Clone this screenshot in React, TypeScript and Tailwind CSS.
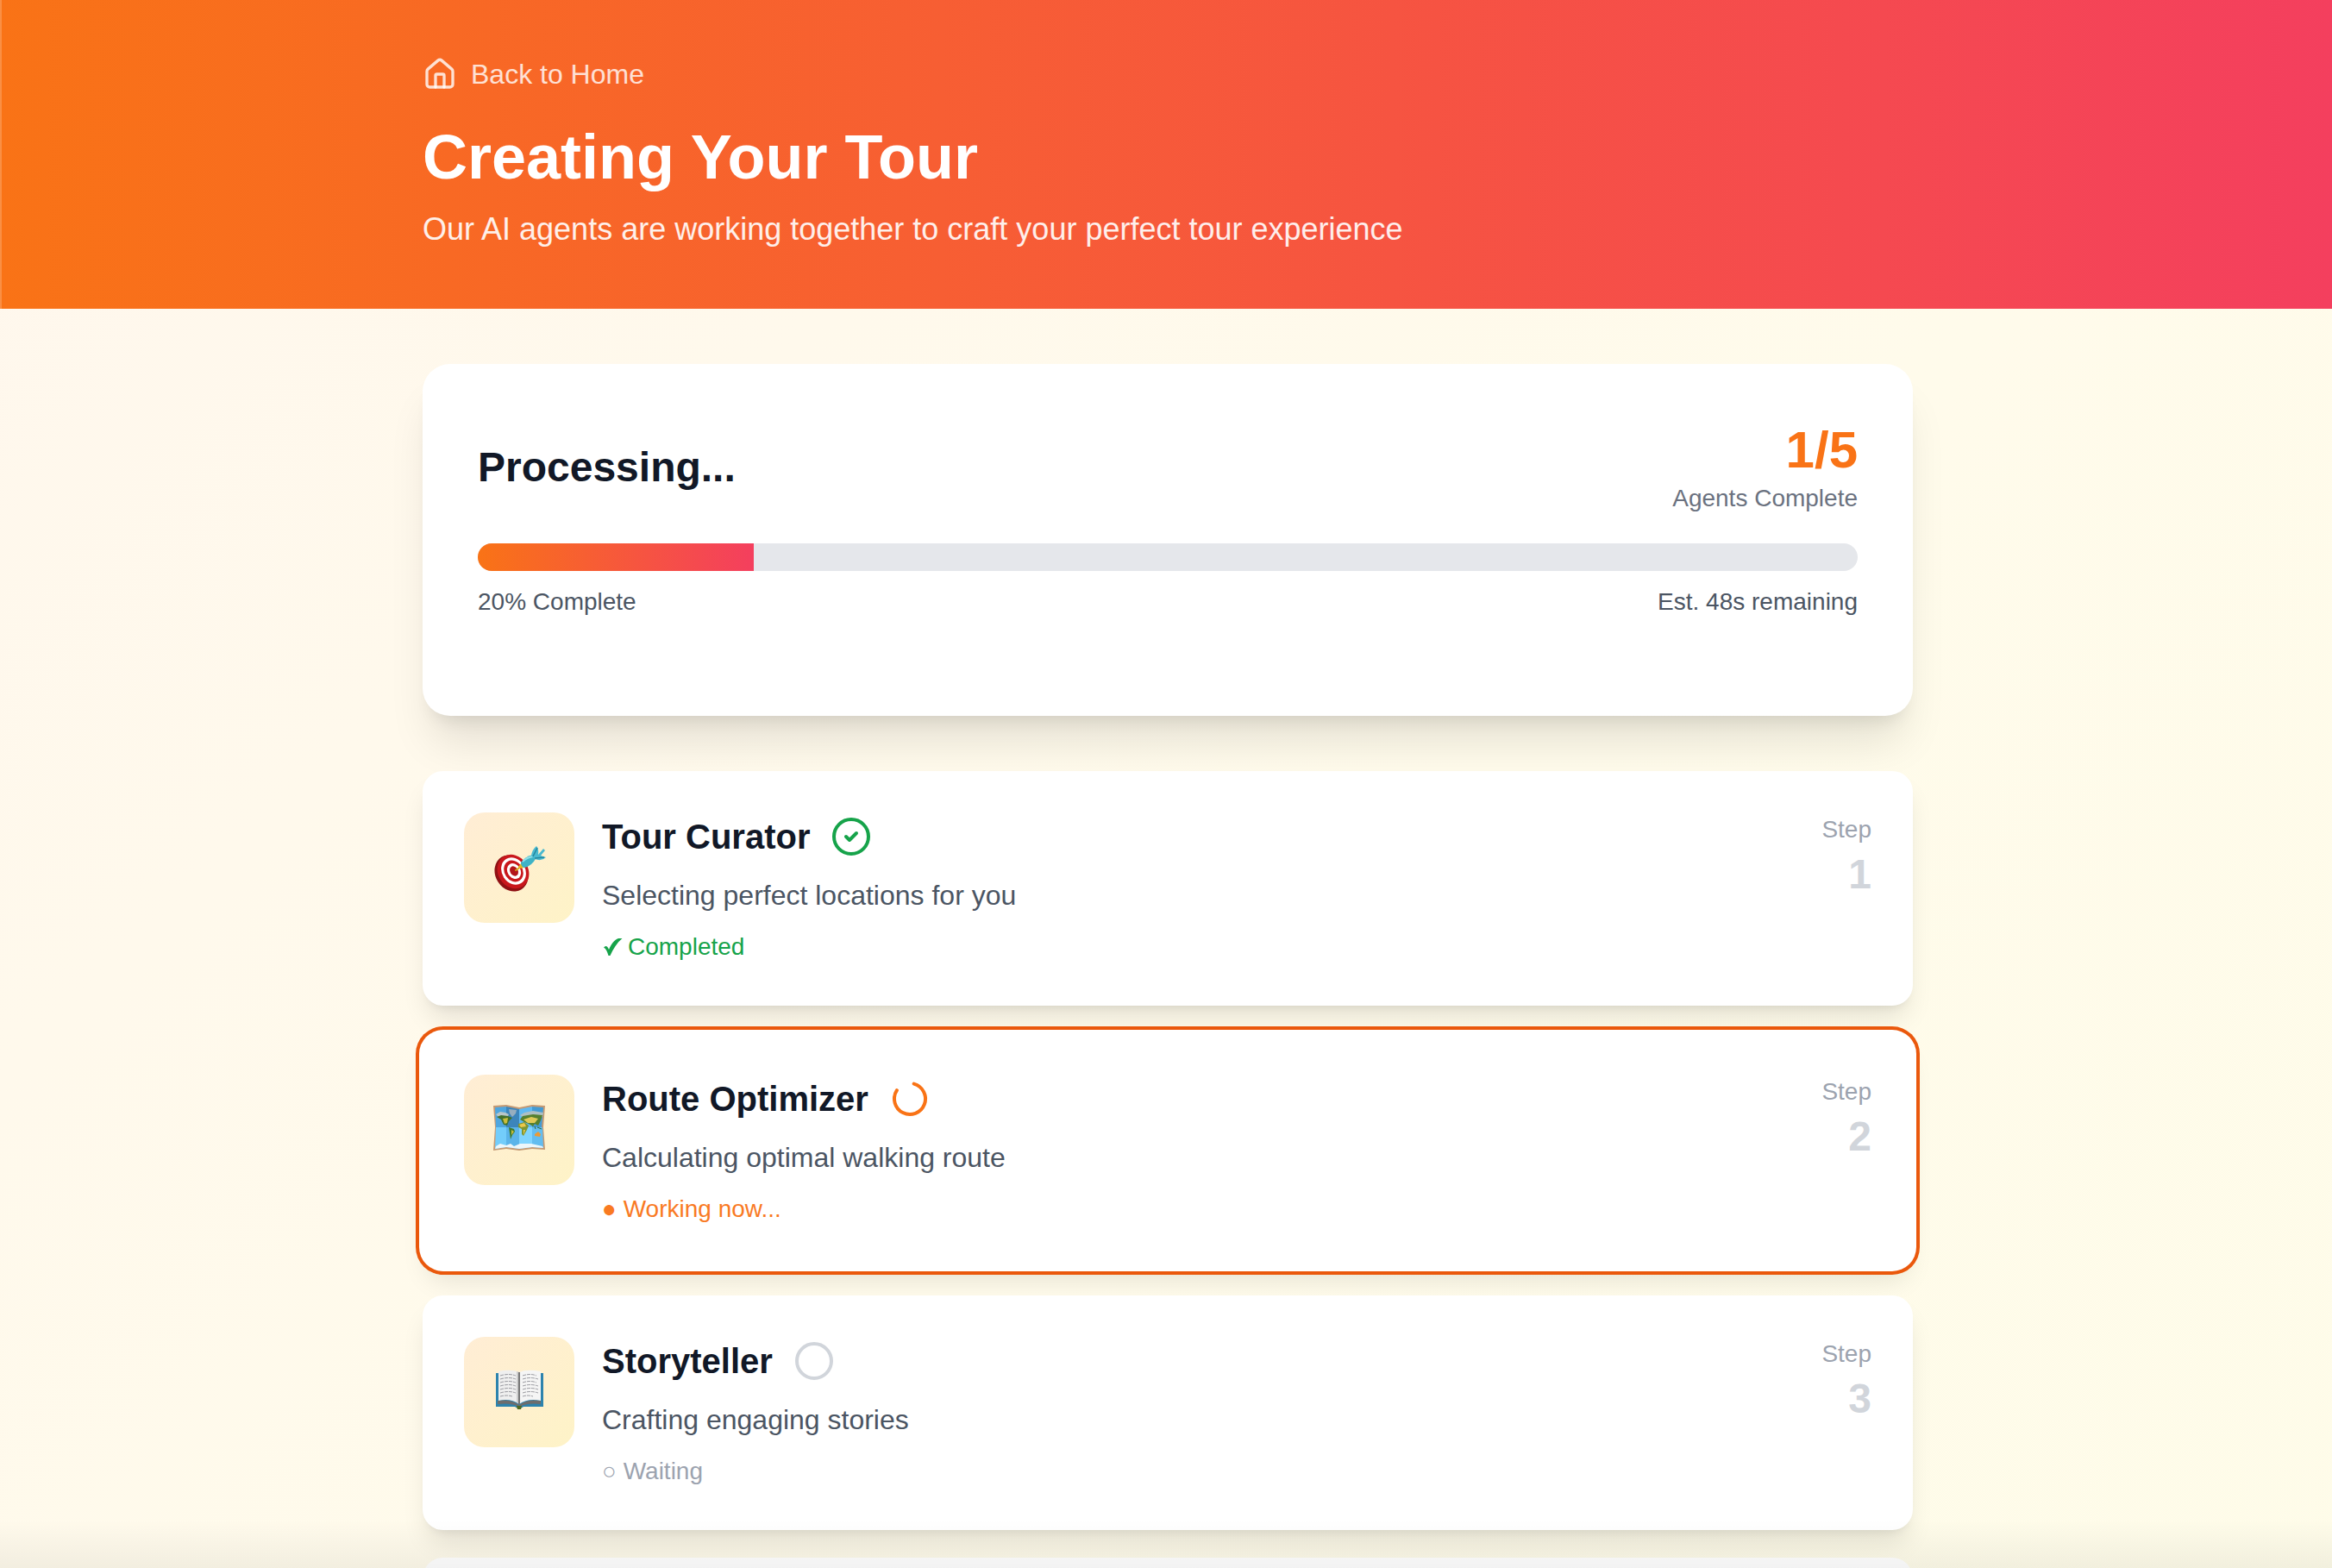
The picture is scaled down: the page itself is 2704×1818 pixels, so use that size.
import { Circle, CircleCheck, House, LoaderCircle } from "lucide-react";
import type { ReactNode } from "react";

type AgentStatus = "completed" | "working" | "waiting";

interface Agent {
  step: number;
  name: string;
  description: string;
  status: AgentStatus;
  icon: ReactNode;
}

function TargetIcon() {
  return (
    <svg className="w-16 h-16" viewBox="0 0 64 64" aria-hidden="true">
      {/* Board */}
      <ellipse cx="23" cy="38.5" rx="18.5" ry="22" transform="rotate(-32 23 38.5)" fill="#8f1114" />
      <ellipse cx="25" cy="36.500" rx="17.500" ry="20.500" transform="rotate(-32 25 36.5)" fill="#c9171c" />
      <ellipse cx="25.500" cy="36" rx="13.500" ry="16.500" transform="rotate(-32 25.5 36)" fill="#fff" />
      <ellipse cx="25.500" cy="36" rx="10.500" ry="13" transform="rotate(-32 25.5 36)" fill="#c9171c" />
      <ellipse cx="26" cy="36" rx="7.500" ry="9.500" transform="rotate(-32 26 36)" fill="#fff" />
      <ellipse cx="26" cy="36" rx="4.500" ry="6" transform="rotate(-32 26 36)" fill="#b3151a" />
      {/* Dart */}
      <path d="M28 35 L34 31" stroke="#d9a514" strokeWidth="2" strokeLinecap="round" />
      <path d="M31 31 L35 26 L38 32 L32 33 Z" fill="#e6b91f" />
      <path d="M34 26 Q39 19 48 17 L52 20 Q47 30 38 32 Q34 31 34 26 Z" fill="#3eb3c6" />
      <path d="M36 25 Q41 20 48 19" stroke="#8fe0e8" strokeWidth="2" fill="none" />
      <path d="M46 18 Q47 11 52 7 Q55 10 54 17 L60 10 L62 12 L57 18 L63 20 Q58 25 50 22 Z" fill="#4ab9cf" />
      <path d="M48 19 L53 9 M50 21 L61 20" stroke="#26879e" strokeWidth="1.500" />
    </svg>
  );
}

function MapIcon() {
  return (
    <svg className="w-16 h-16" viewBox="0 0 64 64" aria-hidden="true">
      {/* Paper */}
      <path d="M2 4 L17 3 L32 6 L47 3 L62 4 L60 29 L62 55 L47 54 L32 56 L17 54 L2 56 L4 29 Z" fill="#c59a74" />
      <path d="M4 6 L17 5 L17 29 L5 29 Z" fill="#4fa6df" />
      <path d="M17 5 L32 8 L32 29 L17 29 Z" fill="#3c85bb" />
      <path d="M32 8 L47 5 L47 29 L32 29 Z" fill="#5fb9f2" />
      <path d="M47 5 L60 6 L58 29 L47 29 Z" fill="#439bd4" />
      <path d="M5 29 L17 29 L17 52 L4 54 Z" fill="#73cdfb" />
      <path d="M17 29 L32 29 L32 54 L17 52 Z" fill="#5bb4ea" />
      <path d="M32 29 L47 29 L47 52 L32 54 Z" fill="#7fd4ff" />
      <path d="M47 29 L59 29 L60 53 L47 52 Z" fill="#63bdf0" />
      {/* Americas */}
      <path d="M5 14 L10 11 L16 12 L20 14 L18 18 L8 17 Z" fill="#b9c6c9" />
      <path d="M6 17 L11 15 L19 16 L24 18 L20 22 L18 27 L14 26 L11 20 Z" fill="#42702c" />
      <path d="M13 19 L19 18 L18 24 L15 25 Z" fill="#c9bd3b" />
      <path d="M20 8 L29 9 L28 13 L24 17 L21 13 Z" fill="#97aebf" />
      <path d="M20 29 L26 31 L27 34 L24 38 L22 43 L21 36 Z" fill="#3f7a2e" />
      <path d="M23 32 L26 34 L23 38 Z" fill="#c9bd3b" />
      {/* Eurasia and Africa */}
      <path d="M33 15 L38 12 L48 10 L60 12 L59 17 L46 17 L38 18 Z" fill="#aebfc2" />
      <path d="M33 20 L36 16 L48 14 L59 15 L57 21 L54 27 L50 25 L48 28 L43 25 L38 23 Z" fill="#55802f" />
      <path d="M37 20 L46 17 L54 19 L50 24 L42 24 Z" fill="#dfc958" />
      <path d="M31 25 L38 23 L43 27 L41 32 L37 39 L35 37 L35 31 L31 29 Z" fill="#7f9632" />
      <path d="M32 26 L38 24 L40 28 L34 29 Z" fill="#ecc84b" />
      <path d="M37 32 L39 32 L37 38 Z" fill="#ecc84b" />
      <path d="M53 29 L58 31 M50 28 L51 31" stroke="#2f6b39" strokeWidth="1" />
      <path d="M50 37 L54 34 L57 37 L56 40 L50 39 Z" fill="#eb9a35" />
      {/* Antarctica */}
      <path d="M5 51 L10 48 L17 50 L22 48 L26 51 L33 48 L46 48 L59 51 L60 53 L47 52 L32 54 L17 52 L4 54 Z" fill="#edf6fa" />
    </svg>
  );
}

function BookIcon() {
  return (
    <svg className="w-16 h-16" viewBox="0 2 64 64" aria-hidden="true">
      <path d="M5 12 L60 12 L60 51 L37 51 Q32 55 27 51 L5 51 Z" fill="#2d83ad" />
      <path d="M7 44 Q22 42 32 49 Q42 42 57 44 L57 48 Q42 46 32 51 Q22 46 7 48 Z" fill="#6d6d6d" />
      <path d="M8 10 Q23 7 32 11 L32 48 Q22 41 8 44 Z" fill="#efefef" />
      <path d="M57 10 Q41 7 32 11 L32 48 Q42 41 57 44 Z" fill="#f5f5f5" />
      <path d="M29 10 L32 11 L32 48 L29 46 Z" fill="#cdcdcd" />
      <path d="M31 11 h2 v37 h-2 Z" fill="#777" />
      <path
        d="M10 15 q10 -3 18 0 M10 19 q10 -3 18 0 M10 23 q10 -3 18 0 M10 27 q10 -3 18 0 M10 31 q10 -3 18 0 M10 35 q10 -3 18 0 M10 39 q8 -2 14 0 M36 15 q9 -3 16 0 M36 19 q9 -3 18 0 M36 23 q9 -3 16 0 M36 27 q9 -3 18 0 M36 31 q9 -3 18 0 M36 35 q9 -3 18 0 M36 39 q6 -2 12 0"
        fill="none"
        stroke="#9b9ba1"
        strokeWidth="1"
        strokeDasharray="4 1"
      />
      <path d="M29 50 h6 l-1 4 h-4 Z" fill="#506b20" />
    </svg>
  );
}

const agents: Agent[] = [
  {
    step: 1,
    name: "Tour Curator",
    description: "Selecting perfect locations for you",
    status: "completed",
    icon: <TargetIcon />,
  },
  {
    step: 2,
    name: "Route Optimizer",
    description: "Calculating optimal walking route",
    status: "working",
    icon: <MapIcon />,
  },
  {
    step: 3,
    name: "Storyteller",
    description: "Crafting engaging stories",
    status: "waiting",
    icon: <BookIcon />,
  },
];

const TOTAL_AGENTS = 5;

function StatusIcon({ status }: { status: AgentStatus }) {
  if (status === "completed") {
    return <CircleCheck className="w-12 h-12 text-[#16a34a]" />;
  }
  if (status === "working") {
    return <LoaderCircle className="w-12 h-12 -rotate-75 text-[#f97316]" />;
  }
  return <Circle className="w-12 h-12 text-[#d1d5db]" />;
}

function StatusText({ status }: { status: AgentStatus }) {
  if (status === "completed") {
    return (
      <p className="flex items-center gap-1.5 mt-4 text-[28px] leading-10 text-[#16a34a]">
        <svg className="w-6 h-6" viewBox="0 0 24 24" fill="currentColor" aria-hidden="true">
          <path d="M2 12.500 C4 10 6.500 10.500 8 15 C11 8 14.500 3.500 19 2 L23.500 2 C17.500 7 13 14 9.500 22 L7.500 22 C6 17.500 5 14 2 12.500 Z" />
        </svg>
        Completed
      </p>
    );
  }
  if (status === "working") {
    return <p className="mt-4 text-[28px] leading-10 text-[#f97316] opacity-95">● Working now...</p>;
  }
  return <p className="mt-4 text-[28px] leading-10 text-[#9ca3af]">○ Waiting</p>;
}

function AgentCard({ agent }: { agent: Agent }) {
  const isWorking = agent.status === "working";

  return (
    <li
      className={`flex items-start gap-8 bg-white rounded-3xl p-12 shadow-[0_20px_30px_-6px_rgb(0_0_0/0.1),0_8px_12px_-8px_rgb(0_0_0/0.1)] ${
        isWorking ? "ring-4 ring-[#ea580c] ring-offset-4 ring-offset-white" : ""
      }`}
    >
      <div className="flex-shrink-0 w-32 h-32 rounded-3xl bg-[linear-gradient(to_bottom_right,#ffedd5,#fef3c7)] flex items-center justify-center">
        {agent.icon}
      </div>
      <div className="flex-1">
        <div className="flex items-center gap-6 mb-4">
          <h3 className="text-[40px] leading-14 font-bold text-[#111827]">{agent.name}</h3>
          <StatusIcon status={agent.status} />
        </div>
        <p className="text-[32px] leading-12 text-[#4b5563]">{agent.description}</p>
        <StatusText status={agent.status} />
      </div>
      <div className="text-right">
        <div className="text-[28px] leading-10 text-[#9ca3af]">Step</div>
        <div className="text-5xl leading-16 font-bold text-[#d1d5db]">{agent.step}</div>
      </div>
    </li>
  );
}

export default function App() {
  const completed = agents.filter((agent) => agent.status === "completed").length;
  const progress = (completed / TOTAL_AGENTS) * 100;

  return (
    <div className="relative h-screen overflow-hidden bg-[linear-gradient(to_bottom_right,#fff7ed,#fffbeb,#fefce8)] bg-[length:100%_2500px] font-['Liberation_Sans',Arial,sans-serif]">
      {/* Header */}
      <header className="bg-[linear-gradient(to_right,#f97316,#f43f5e)] shadow-[inset_2px_0_rgb(255_255_255/0.2)] pt-[62px] pb-16 text-white">
        <div className="max-w-[1796px] mx-auto pl-9 pr-8">
          <a href="#" className="flex w-fit items-center gap-4 mb-8 text-[32px] leading-12 text-white/80">
            <House className="w-10 h-10" />
            Back to Home
          </a>
          <h1 className="text-7xl leading-20 font-bold mb-4">Creating Your Tour</h1>
          <p className="text-4xl leading-14 text-white/90">
            Our AI agents are working together to craft your perfect tour experience
          </p>
        </div>
      </header>

      <main className="max-w-[1796px] mx-auto pl-9 pr-8 py-16">
        {/* Overall progress */}
        <section className="bg-white rounded-4xl p-16 mb-16 shadow-[0_40px_50px_-10px_rgb(0_0_0/0.1),0_16px_20px_-12px_rgb(0_0_0/0.1)]">
          <div className="flex items-center justify-between mb-8">
            <h2 className="text-5xl leading-16 font-bold text-[#111827]">Processing...</h2>
            <div className="text-right">
              <div className="text-6xl leading-18 font-bold text-[#f97316]">
                {completed}/{TOTAL_AGENTS}
              </div>
              <div className="text-[28px] leading-10 text-[#6b7280]">Agents Complete</div>
            </div>
          </div>
          <div className="h-8 rounded-full bg-[#e5e7eb] overflow-hidden">
            <div
              className="h-full bg-[linear-gradient(to_right,#f97316,#f43f5e)]"
              style={{ width: `${progress}%` }}
            />
          </div>
          <div className="flex justify-between mt-4 mb-12 text-[28px] leading-10 text-[#4b5563]">
            <span>{progress}% Complete</span>
            <span>Est. 48s remaining</span>
          </div>
        </section>

        {/* Agents */}
        <ul className="flex flex-col gap-8">
          {agents.map((agent) => (
            <AgentCard key={agent.step} agent={agent} />
          ))}
          <li className="h-68 rounded-3xl bg-white" />
        </ul>
      </main>

      {/* Fade along the bottom edge */}
      <div className="pointer-events-none absolute inset-x-0 bottom-0 h-14 bg-linear-to-t from-black/5 to-transparent" />
    </div>
  );
}
